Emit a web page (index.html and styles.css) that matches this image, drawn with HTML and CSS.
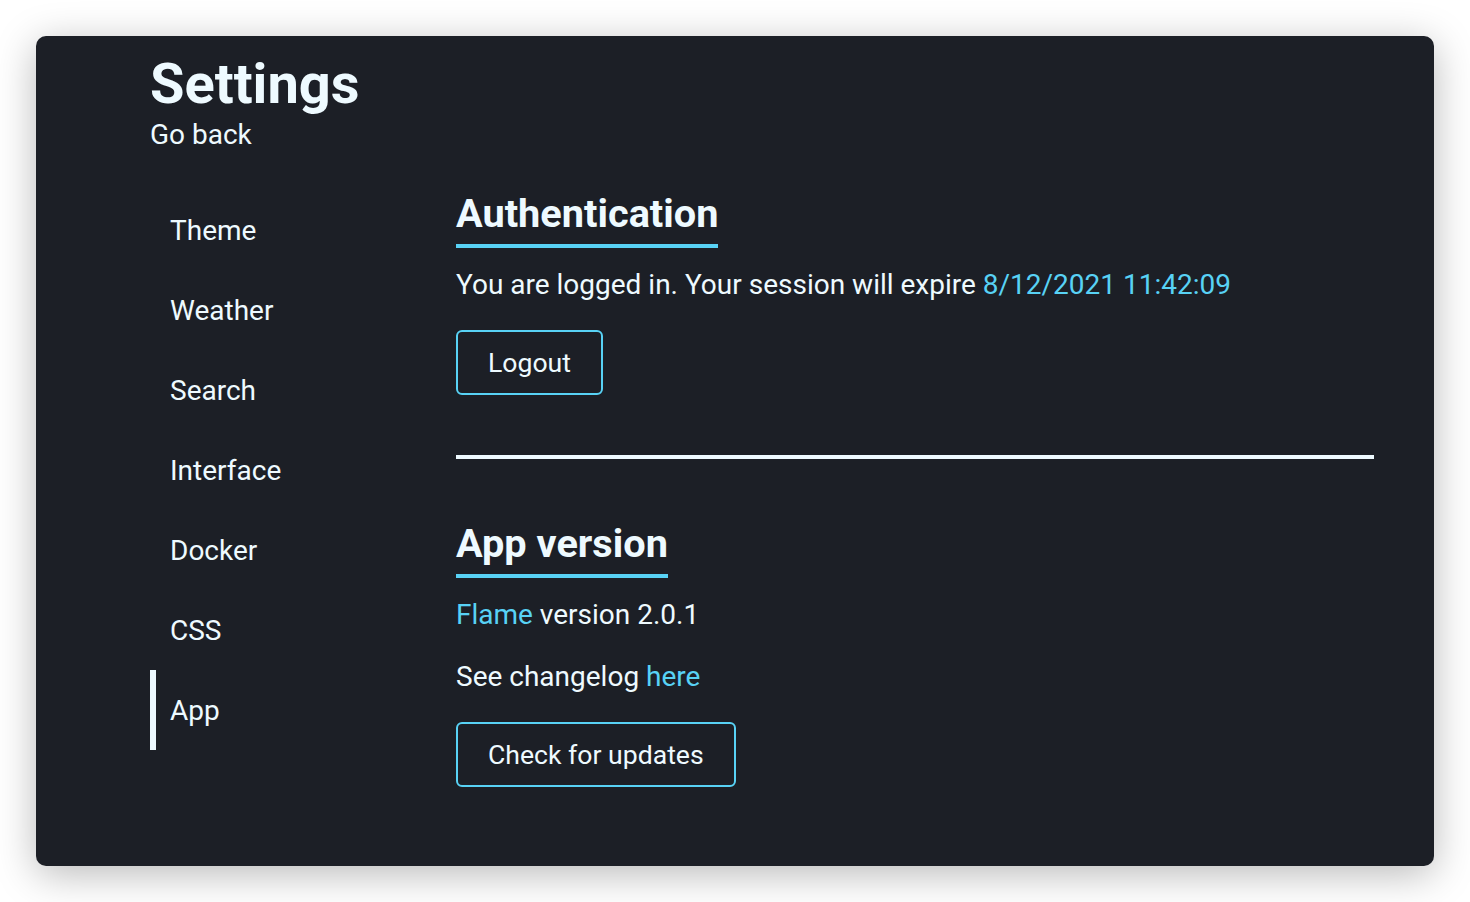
FILE: index.html
```html
<!DOCTYPE html>
<html>
<head>
<meta charset="utf-8">
<link rel="stylesheet" href="styles.css">
</head>
<body>
<div class="window">
  <header class="head">
    <h1 class="title">Settings</h1>
    <a class="back">Go back</a>
  </header>
  <div class="layout">
    <nav class="side">
      <a class="nav-item">Theme</a>
      <a class="nav-item">Weather</a>
      <a class="nav-item">Search</a>
      <a class="nav-item">Interface</a>
      <a class="nav-item">Docker</a>
      <a class="nav-item">CSS</a>
      <a class="nav-item active">App</a>
    </nav>
    <main class="content">
      <section class="section">
        <h2 class="sec-title">Authentication</h2>
        <p class="text">You are logged in. Your session will expire <span class="accent">8/12/2021 11:42:09</span></p>
        <button class="btn">Logout</button>
      </section>
      <hr class="divider">
      <section class="section">
        <h2 class="sec-title">App version</h2>
        <p class="text"><span class="accent">Flame</span> version 2.0.1</p>
        <p class="text text-gap">See changelog <span class="accent">here</span></p>
        <button class="btn">Check for updates</button>
      </section>
    </main>
  </div>
</div>
</body>
</html>
```
FILE: styles.css
```css
html, body {
  margin: 0;
  padding: 0;
  background: #ffffff;
}
body {
  font-family: Roboto, "Liberation Sans", sans-serif;
  color: #eefaff;
}
.window {
  margin: 36px;
  height: 830px;
  box-sizing: border-box;
  background: #1c1f26;
  border-radius: 10px;
  box-shadow: 0 8px 40px rgba(0, 0, 0, 0.28);
  padding: 15px 60px 0 114px;
}
.head {
  display: flex;
  flex-direction: column;
  align-items: flex-start;
}
.title {
  margin: 0;
  font-size: 56px;
  line-height: 66px;
  font-weight: 700;
}
.back {
  margin-top: 3px;
  font-size: 28px;
  line-height: 30px;
}
.layout {
  display: flex;
  margin-top: 40px;
}
.side {
  width: 306px;
  flex: none;
  display: flex;
  flex-direction: column;
}
.nav-item {
  height: 80px;
  line-height: 82px;
  border-left: 6px solid transparent;
  padding-left: 14px;
  font-size: 28px;
}
.nav-item.active {
  border-left-color: #eefaff;
}
.content {
  flex: 1;
  display: flex;
  flex-direction: column;
  align-items: flex-start;
}
.section {
  display: flex;
  flex-direction: column;
  align-items: flex-start;
}
.sec-title {
  margin: 0;
  font-size: 39.7px;
  line-height: 48px;
  font-weight: 700;
  padding-bottom: 6px;
  border-bottom: 4px solid #58d2f5;
}
.text {
  margin: 21px 0 0;
  font-size: 28px;
  line-height: 32px;
}
.text-gap {
  margin-top: 30px;
}
.accent {
  color: #58d2f5;
}
.btn {
  margin-top: 29px;
  font-family: inherit;
  font-size: 26.6px;
  color: #eefaff;
  background: transparent;
  border: 2px solid #58d2f5;
  border-radius: 6px;
  height: 65px;
  padding: 0 30px;
}
.divider {
  align-self: stretch;
  margin: 60px 0 61px;
  border: 0;
  height: 4px;
  background: #eefaff;
}
```
